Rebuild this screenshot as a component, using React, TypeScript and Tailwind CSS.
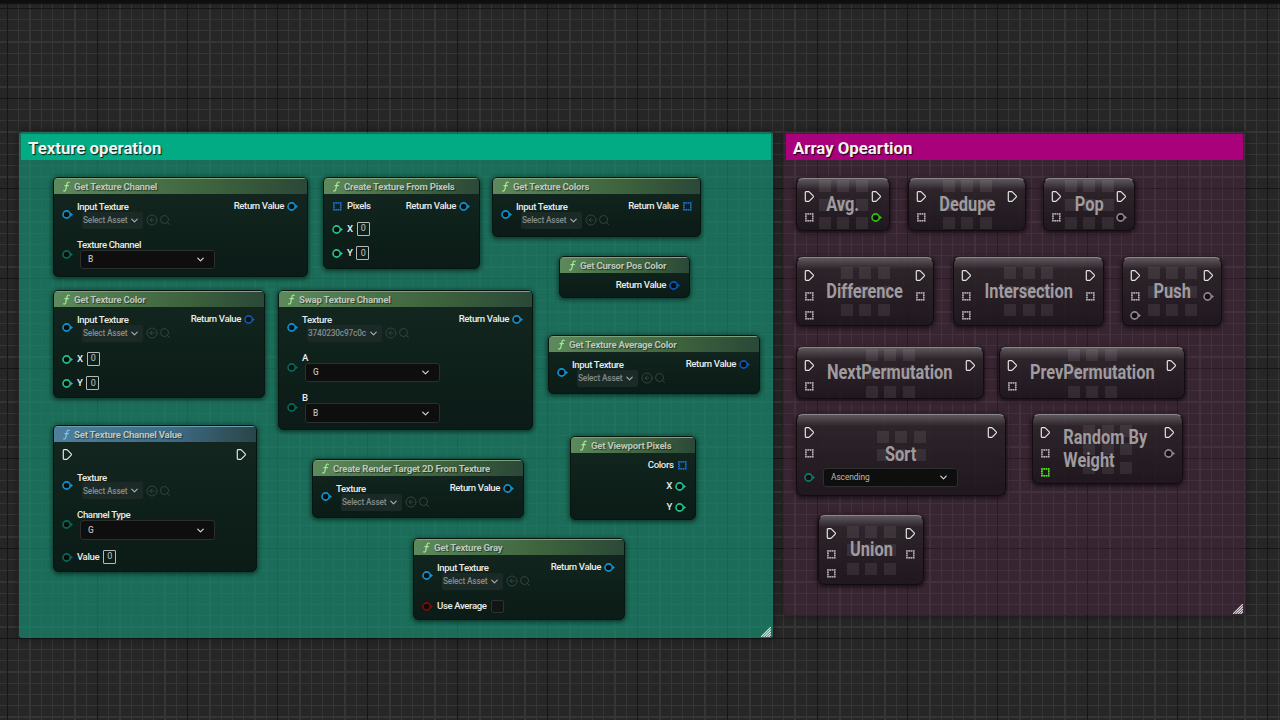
import type { ReactNode } from "react";
import { ChevronDown, CircleArrowLeft, Search } from "lucide-react";

type PinKind = "exec" | "value" | "array";

type Pin = {
  kind: PinKind;
  color?: string;
  label?: string;
  asset?: string;
  option?: string;
  number?: string;
  checkbox?: boolean;
};

type FunctionNodeData = {
  title: string;
  place: string;
  tone?: "green" | "blue";
  inputs: Pin[];
  outputs: Pin[];
};

type ArrayNodeData = {
  title: string;
  place: string;
  inputs: Pin[];
  outputs: Pin[];
  multiline?: boolean;
};

const OBJECT = "#0f93d8";
const STRUCT = "#0d58b8";
const INT = "#22c48f";
const BYTE = "#07695a";
const BOOL = "#8e0505";
const FLOAT = "#35c40c";
const WILD = "#8d888b";

const exec: Pin = { kind: "exec" };
const wildArray: Pin = { kind: "array", color: "#b4afb3" };
const wildValue: Pin = { kind: "value", color: WILD };
const returnObject: Pin = { kind: "value", color: OBJECT, label: "Return Value" };
const returnStruct: Pin = { kind: "value", color: STRUCT, label: "Return Value" };

const asset = (label: string, name = "Select Asset"): Pin => ({ kind: "value", color: OBJECT, label, asset: name });
const option = (label: string, value: string): Pin => ({ kind: "value", color: BYTE, label, option: value });
const int = (label: string): Pin => ({ kind: "value", color: INT, label, number: "0" });

const functionNodes: FunctionNodeData[] = [
  {
    title: "Get Texture Channel",
    place: "left-[53px] top-[177px] w-[255px] h-[100px]",
    inputs: [asset("Input Texture"), option("Texture Channel", "B")],
    outputs: [returnObject],
  },
  {
    title: "Create Texture From Pixels",
    place: "left-[323px] top-[177px] w-[157px] h-[92px]",
    inputs: [{ kind: "array", color: "#1a70d8", label: "Pixels" }, int("X"), int("Y")],
    outputs: [returnObject],
  },
  {
    title: "Get Texture Colors",
    place: "left-[492px] top-[177px] w-[209px] h-[60px]",
    inputs: [asset("Input Texture")],
    outputs: [{ kind: "array", color: "#1a70d8", label: "Return Value" }],
  },
  {
    title: "Get Cursor Pos Color",
    place: "left-[559px] top-[256px] w-[131px] h-[42px]",
    inputs: [],
    outputs: [returnStruct],
  },
  {
    title: "Get Texture Color",
    place: "left-[53px] top-[290px] w-[212px] h-[108px]",
    inputs: [asset("Input Texture"), int("X"), int("Y")],
    outputs: [returnStruct],
  },
  {
    title: "Swap Texture Channel",
    place: "left-[278px] top-[290px] w-[255px] h-[140px]",
    inputs: [asset("Texture", "3740230c97c0c"), option("A", "G"), option("B", "B")],
    outputs: [returnObject],
  },
  {
    title: "Get Texture Average Color",
    place: "left-[548px] top-[335px] w-[212px] h-[59px]",
    inputs: [asset("Input Texture")],
    outputs: [returnStruct],
  },
  {
    title: "Set Texture Channel Value",
    place: "left-[53px] top-[425px] w-[204px] h-[147px]",
    tone: "blue",
    inputs: [exec, asset("Texture"), option("Channel Type", "G"), { kind: "value", color: BYTE, label: "Value", number: "0" }],
    outputs: [exec],
  },
  {
    title: "Get Viewport Pixels",
    place: "left-[570px] top-[436px] w-[126px] h-[84px]",
    inputs: [],
    outputs: [
      { kind: "array", color: "#1a70d8", label: "Colors" },
      { kind: "value", color: INT, label: "X" },
      { kind: "value", color: INT, label: "Y" },
    ],
  },
  {
    title: "Create Render Target 2D From Texture",
    place: "left-[312px] top-[459px] w-[212px] h-[59px]",
    inputs: [asset("Texture")],
    outputs: [returnObject],
  },
  {
    title: "Get Texture Gray",
    place: "left-[413px] top-[538px] w-[212px] h-[82px]",
    inputs: [asset("Input Texture"), { kind: "value", color: BOOL, label: "Use Average", checkbox: true }],
    outputs: [returnObject],
  },
];

const arrayNodes: ArrayNodeData[] = [
  {
    title: "Avg.",
    place: "left-[796px] top-[178px] w-[94px] h-[53px]",
    inputs: [exec, wildArray],
    outputs: [exec, { kind: "value", color: FLOAT }],
  },
  { title: "Dedupe", place: "left-[908px] top-[178px] w-[118px] h-[53px]", inputs: [exec, wildArray], outputs: [exec] },
  { title: "Pop", place: "left-[1043px] top-[178px] w-[92px] h-[53px]", inputs: [exec, wildArray], outputs: [exec, wildValue] },
  {
    title: "Difference",
    place: "left-[796px] top-[257px] w-[138px] h-[69px]",
    inputs: [exec, wildArray, wildArray],
    outputs: [exec, wildArray],
  },
  {
    title: "Intersection",
    place: "left-[953px] top-[257px] w-[151px] h-[69px]",
    inputs: [exec, wildArray, wildArray],
    outputs: [exec, wildArray],
  },
  {
    title: "Push",
    place: "left-[1122px] top-[257px] w-[100px] h-[69px]",
    inputs: [exec, wildArray, wildValue],
    outputs: [exec, wildValue],
  },
  { title: "NextPermutation", place: "left-[796px] top-[347px] w-[188px] h-[52px]", inputs: [exec, wildArray], outputs: [exec] },
  { title: "PrevPermutation", place: "left-[999px] top-[347px] w-[186px] h-[52px]", inputs: [exec, wildArray], outputs: [exec] },
  {
    title: "Sort",
    place: "left-[796px] top-[414px] w-[210px] h-[82px]",
    inputs: [exec, wildArray, { kind: "value", color: "#087f6c", option: "Ascending" }],
    outputs: [exec],
  },
  {
    title: "Random By Weight",
    place: "left-[1032px] top-[414px] w-[151px] h-[70px]",
    inputs: [exec, wildArray, { kind: "array", color: "#4cf014" }],
    outputs: [exec, wildValue],
    multiline: true,
  },
  {
    title: "Union",
    place: "left-[818px] top-[515px] w-[106px] h-[70px]",
    inputs: [exec, wildArray, wildArray],
    outputs: [exec, wildArray],
  },
];

function PinIcon({ kind, color }: { kind: PinKind; color?: string }) {
  if (kind === "exec") {
    return (
      <svg className="w-[11px] h-[11px] shrink-0" viewBox="0 0 11 11" fill="none">
        <path
          d="M2 .7h2.6q.5 0 .9.4l3.7 3.8q.5.6 0 1.2L5.5 9.9q-.4.4-.9.4H2q-.7 0-.7-.7V1.4Q1.3.7 2 .7z"
          stroke="#e4e4e4"
          strokeWidth="1.2"
        />
      </svg>
    );
  }
  if (kind === "array") {
    return (
      <svg className="w-[11px] h-[11px] shrink-0" viewBox="0 0 11 11" fill={color}>
        <path d="M2 2h6.6v6.6H2z" fill="none" stroke={color} strokeWidth="1.2" opacity=".4" />
        {[0, 1, 2, 3].map((row) =>
          [0, 1, 2, 3].map((col) =>
            row % 3 && col % 3 ? null : (
              <rect key={`${row}${col}`} x={1.1 + col * 2.3} y={1.1 + row * 2.3} width="1.6" height="1.6" />
            )
          )
        )}
      </svg>
    );
  }
  return (
    <svg className="w-[11px] h-[11px] shrink-0" viewBox="0 0 11 11">
      <circle cx="4.6" cy="5.5" r="3.6" fill="#000" fillOpacity=".5" stroke={color} strokeWidth="1.6" />
      <path d="M8.4 3.4 11 5.5 8.4 7.6z" fill={color} />
    </svg>
  );
}

function OptionBox({ value }: { value: string }) {
  return (
    <div className="w-[135px] h-[19.5px] ml-[3px] pl-[7px] pr-[8px] flex items-center justify-between rounded-[3px] border border-[#2b2f2e] bg-[#0e0e0e] text-[8.4px] text-[#b8b8b8]">
      <span className="tracking-[-0.01em]">{value}</span>
      <ChevronDown className="w-[11px] h-[11px] text-[#cfcfcf]" strokeWidth={2.8} />
    </div>
  );
}

function AssetBox({ name }: { name: string }) {
  return (
    <div className="flex items-center">
      <div className="h-[17px] ml-[5px] pl-[1px] pr-[3px] flex items-center gap-[2px] rounded-[2px] bg-[#1c2a27] text-[8.3px] text-[#838d8a]">
        <span className="whitespace-nowrap tracking-[-0.02em]">{name}</span>
        <ChevronDown className="w-[11px] h-[11px] text-[#a4adab]" strokeWidth={2.6} />
      </div>
      <CircleArrowLeft className="w-[12px] h-[12px] ml-[3px] text-[#34443f]" />
      <Search className="w-[12px] h-[12px] ml-[1px] text-[#34443f]" />
    </div>
  );
}

function InputPin({ pin }: { pin: Pin }) {
  let content: ReactNode = pin.label;
  let height = pin.kind === "exec" ? "h-[13px]" : "h-[12px]";

  if (pin.asset) {
    height = "h-[29px]";
    content = (
      <div>
        <div className="h-[11.5px] leading-[13px]">{pin.label}</div>
        <AssetBox name={pin.asset} />
      </div>
    );
  } else if (pin.option) {
    height = "h-[31px]";
    content = (
      <div>
        <div className="h-[11px] leading-[11px]">{pin.label}</div>
        <OptionBox value={pin.option} />
      </div>
    );
  } else if (pin.number) {
    height = "h-[15px]";
    content = (
      <div className="flex items-center gap-[4px]">
        {pin.label}
        <span className="w-[13px] h-[14px] flex items-center justify-center rounded-[1px] border border-[#b5bab8] text-[9px] font-normal text-[#c2c7c5]">
          {pin.number}
        </span>
      </div>
    );
  } else if (pin.checkbox) {
    height = "h-[14px]";
    content = (
      <div className="flex items-center gap-[4px]">
        {pin.label}
        <span className="w-[13px] h-[13px] rounded-[2px] border border-[#2d3331] bg-[#131414]" />
      </div>
    );
  }

  return (
    <div className={`flex items-center gap-[4px] ${height}`}>
      <PinIcon kind={pin.kind} color={pin.color} />
      {content}
    </div>
  );
}

function FunctionNode({ node }: { node: FunctionNodeData }) {
  const blue = node.tone === "blue";
  return (
    <div
      className={`absolute flex flex-col overflow-hidden rounded-[5px] border border-[#08140f] bg-linear-to-b from-[#13271f] to-[#0b1b17] shadow-[0_1px_4px_1px_rgba(0,20,14,0.6)] ${node.place}`}
    >
      <div
        className={`h-[16px] shrink-0 pl-[9px] flex items-center gap-[4px] border-t bg-linear-to-r ${
          blue
            ? "border-[#6f9db0] from-[#4e7f9d] via-[#3d6a84] via-60% to-[#2a4548]"
            : "border-[#7fa27c] from-[#5d8a5c] via-[#3c613c] via-65% to-[#2b4838]"
        }`}
      >
        <svg className="w-[7px] h-[11px]" viewBox="0 0 7 11" fill="none" stroke={blue ? "#7fc4ee" : "#a5ea97"} strokeLinecap="round">
          <path d="M6.3 1.4C5.2.5 4.3 1.3 4 2.7L2.8 8.3C2.5 9.7 1.6 10.4.6 9.8M1.9 4.6h3.5" strokeWidth="1.2" />
        </svg>
        <span className="whitespace-nowrap text-[9.6px] leading-[14px] font-bold tracking-[-0.23px] text-[#bdc8bc] [text-shadow:1px_1px_1px_rgba(0,0,0,0.5)]">
          {node.title}
        </span>
      </div>
      <div className="pt-[6px] pl-[8px] pr-[9px] flex justify-between text-[9.6px] font-medium tracking-[-0.38px] text-[#e9eceb]">
        <div className="flex flex-col gap-[9.5px]">
          {node.inputs.map((pin, i) => (
            <InputPin key={i} pin={pin} />
          ))}
        </div>
        <div className="flex flex-col items-end gap-[9px]">
          {node.outputs.map((pin, i) => (
            <div
              key={i}
              className={`flex items-center gap-[3px] whitespace-nowrap ${pin.kind === "exec" ? "h-[13px]" : "h-[12px]"} ${
                pin.kind === "array" ? "-mr-[1.5px]" : ""
              }`}
            >
              {pin.label}
              <PinIcon kind={pin.kind} color={pin.color} />
            </div>
          ))}
        </div>
      </div>
    </div>
  );
}

function ArrayNode({ node }: { node: ArrayNodeData }) {
  return (
    <div
      className={`absolute grid overflow-hidden rounded-[7px] border border-[#120c11] border-t-[#8b878a] bg-linear-to-b from-[#625d61]/90 from-0% via-[#2b2429]/85 via-[11px] to-[#1b151a]/85 shadow-[0_1px_4px_1px_rgba(0,0,0,0.6)] ${node.place}`}
    >
      <div className="col-start-1 row-start-1 place-self-center grid grid-cols-3 gap-[6.5px]">
        {Array.from({ length: 9 }, (_, i) => (
          <span key={i} className="w-[12px] h-[12px] bg-white/8" />
        ))}
      </div>
      <div className="col-start-1 row-start-1 place-self-center">
        <div
          className={`scale-x-[0.84] text-[19.5px] font-bold text-[#a09b9f] ${
            node.multiline ? "w-[104px] leading-[23px] -mt-px -ml-[2px]" : "leading-[20px] whitespace-nowrap"
          }`}
        >
          {node.title}
        </div>
      </div>
      <div className="col-start-1 row-start-1 pt-[11px] px-[7px] flex justify-between text-[10px]">
        <div className="flex flex-col gap-[7.5px]">
          {node.inputs.map((pin, i) =>
            pin.option ? (
              <div key={i} className="h-[21px] pt-px flex items-center gap-[5px]">
                <PinIcon kind={pin.kind} color={pin.color} />
                <OptionBox value={pin.option} />
              </div>
            ) : (
              <div key={i} className={`flex items-center ${i === 0 ? "h-[13.5px]" : "h-[12px]"}`}>
                <PinIcon kind={pin.kind} color={pin.color} />
              </div>
            )
          )}
        </div>
        <div className="flex flex-col gap-[7.5px]">
          {node.outputs.map((pin, i) => (
            <div key={i} className={`flex items-center ${i === 0 ? "h-[13.5px]" : "h-[12px]"}`}>
              <PinIcon kind={pin.kind} color={pin.color} />
            </div>
          ))}
        </div>
      </div>
    </div>
  );
}

function CommentBox({ title, place, header, body }: { title: string; place: string; header: string; body: string }) {
  return (
    <div
      className={`absolute flex flex-col justify-between px-[2px] pt-[2px] rounded-[3px] shadow-[0_0_6px_1px_rgba(0,0,0,0.4)] ${body} ${place}`}
    >
      <div
        className={`h-[26px] pt-[3px] pl-[7px] flex items-center text-[16.8px] font-bold text-[#f2f2f2] [text-shadow:1px_1px_1px_rgba(0,0,0,0.8)] ${header}`}
      >
        {title}
      </div>
      <svg className="w-[10px] h-[10px] mb-px self-end" viewBox="0 0 10 10" stroke="#e6e6e6" strokeWidth="1.1">
        <path d="M0 10 10 0M2.5 10 10 2.5M5 10l5-5M7.5 10 10 7.5" />
      </svg>
    </div>
  );
}

export default function App() {
  return (
    <div className="relative w-[1280px] h-[720px] overflow-hidden bg-[#262626] font-['Roboto',sans-serif]">
      {/* blueprint grid: minor lines, then major lines every 8 cells */}
      <div className="absolute inset-0 bg-[repeating-linear-gradient(90deg,transparent_0_6.9px,#353535_6.9px_8.1px,transparent_8.1px_11.25px),repeating-linear-gradient(180deg,transparent_0_7.7px,#353535_7.7px_8.9px,transparent_8.9px_11.25px)]" />
      <div className="absolute inset-0 bg-[repeating-linear-gradient(90deg,transparent_0_6.9px,#161616_6.9px_8px,transparent_8px_90px),repeating-linear-gradient(180deg,transparent_0_7.7px,#161616_7.7px_8.8px,transparent_8.8px_90px)]" />
      <div className="absolute inset-x-0 top-0 h-[5px] bg-linear-to-b from-[#0e0e0e] from-60% to-transparent" />

      <CommentBox
        title="Texture operation"
        place="left-[19px] top-[132px] w-[754px] h-[506px]"
        header="bg-[#02ab84]"
        body="bg-[#159273]/65"
      />
      <CommentBox
        title="Array Opeartion"
        place="left-[784px] top-[132px] w-[461px] h-[483px]"
        header="bg-[#a9007b]"
        body="bg-[#62234e]/30"
      />

      {functionNodes.map((node) => (
        <FunctionNode key={node.title} node={node} />
      ))}
      {arrayNodes.map((node) => (
        <ArrayNode key={node.title} node={node} />
      ))}
    </div>
  );
}
